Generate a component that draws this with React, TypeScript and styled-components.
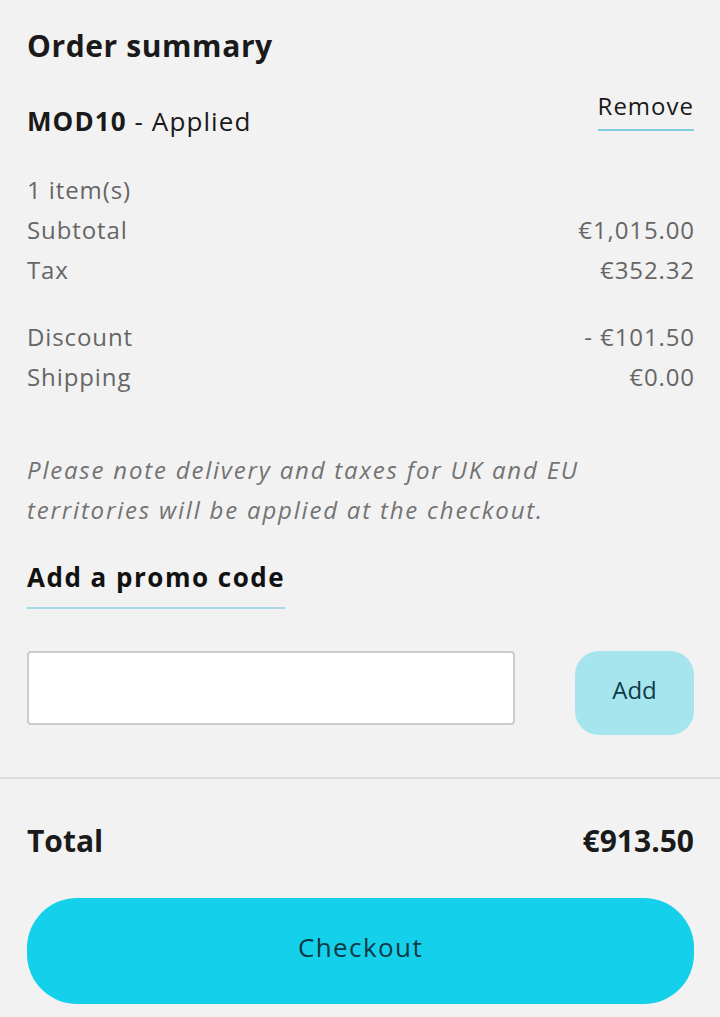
import React from 'react'
import styled, { createGlobalStyle } from 'styled-components'

const GlobalStyle = createGlobalStyle`
    * { box-sizing: border-box; }
    html, body {
        margin: 0;
        padding: 0;
        background: #f2f2f2;
    }
    body {
        font-family: 'Open Sans', 'Lato', sans-serif;
        color: #1a1a1a;
    }
`

interface Line {
    label: string;
    value: string;
}

const firstGroup: Line[] = [
    { label: 'Subtotal', value: '€1,015.00' },
    { label: 'Tax', value: '€352.32' },
]

const secondGroup: Line[] = [
    { label: 'Discount', value: '- €101.50' },
    { label: 'Shipping', value: '€0.00' },
]

function App() {
    return (
        <>
            <GlobalStyle />
            <Page>
                <Section>
                    <Title>Order summary</Title>

                    <CouponRow>
                        <CouponText><b>MOD10</b> - Applied</CouponText>
                        <LinkButton>Remove</LinkButton>
                    </CouponRow>

                    <Lines>
                        <Muted>1 item(s)</Muted>
                        {firstGroup.map(l => (
                            <LineRow key={l.label}>
                                <span>{l.label}</span>
                                <span>{l.value}</span>
                            </LineRow>
                        ))}
                    </Lines>

                    <Lines $gap>
                        {secondGroup.map(l => (
                            <LineRow key={l.label}>
                                <span>{l.label}</span>
                                <span>{l.value}</span>
                            </LineRow>
                        ))}
                    </Lines>

                    <Note>
                        Please note delivery and taxes for UK and EU territories will be applied at the checkout.
                    </Note>

                    <PromoHeading>Add a promo code</PromoHeading>

                    <PromoForm>
                        <PromoInput type="text" />
                        <AddButton>Add</AddButton>
                    </PromoForm>
                </Section>

                <Footer>
                    <TotalRow>
                        <span>Total</span>
                        <span>€913.50</span>
                    </TotalRow>
                    <CheckoutButton>Checkout</CheckoutButton>
                </Footer>
            </Page>
        </>
    )
}

export default App

export const Page = styled.div`
    width: 720px;
    min-height: 1017px;
    background: #f2f2f2;
`

export const Section = styled.div`
    padding: 26px 26px 42px 27px;
    border-bottom: 2px solid #dddddd;
`

export const Title = styled.h2`
    margin: 0;
    font-size: 30px;
    line-height: 40px;
    font-weight: 700;
    letter-spacing: 0.6px;
    color: #1a1a1a;
`

export const CouponRow = styled.div`
    display: flex;
    justify-content: space-between;
    align-items: flex-start;
    margin-top: 30px;
`

export const CouponText = styled.div`
    font-size: 26px;
    line-height: 34px;
    margin-top: 8px;
    letter-spacing: 1.1px;
    b { font-weight: 700; }
`

export const LinkButton = styled.button`
    background: none;
    border: none;
    margin-top: -4px;
    padding: 0 0 9px;
    font-family: inherit;
    font-size: 24px;
    line-height: 28px;
    letter-spacing: 1px;
    color: #1a1a1a;
    border-bottom: 2px solid #7fcfdf;
    cursor: pointer;
`

export const Lines = styled.div<{ $gap?: boolean }>`
    margin-top: ${p => (p.$gap ? '27px' : '32px')};
    margin-right: -1px;
    display: flex;
    flex-direction: column;
    font-size: 24px;
    line-height: 40px;
    letter-spacing: 0.9px;
    color: #666666;
`

export const Muted = styled.div`
    color: #666666;
`

export const LineRow = styled.div`
    display: flex;
    justify-content: space-between;
`

export const Note = styled.p`
    margin: 53px 0 0;
    font-size: 24px;
    line-height: 40px;
    font-style: italic;
    color: #737373;
    letter-spacing: 1.8px;
    max-width: 600px;
`

export const PromoHeading = styled.h3`
    display: inline-block;
    margin: 30px 0 0;
    padding-bottom: 13px;
    font-size: 26px;
    line-height: 34px;
    font-weight: 700;
    letter-spacing: 1.5px;
    color: #111111;
    border-bottom: 2px solid #a6d8ea;
`

export const PromoForm = styled.div`
    display: flex;
    justify-content: space-between;
    align-items: flex-start;
    margin-top: 42px;
`

export const PromoInput = styled.input`
    width: 488px;
    height: 74px;
    background: #ffffff;
    border: 2px solid #cccccc;
    border-radius: 4px;
    font-size: 24px;
    padding: 0 16px;
    font-family: inherit;
`

export const AddButton = styled.button`
    width: 119px;
    height: 84px;
    padding: 0 0 8px;
    border: none;
    border-radius: 24px;
    background: #a6e4ee;
    color: #0d3c48;
    font-family: inherit;
    font-size: 24px;
    cursor: pointer;
`

export const Footer = styled.div`
    padding: 42px 26px 14px 27px;
`

export const TotalRow = styled.div`
    display: flex;
    justify-content: space-between;
    font-size: 30px;
    line-height: 40px;
    font-weight: 700;
    color: #1a1a1a;
`

export const CheckoutButton = styled.button`
    width: 100%;
    height: 106px;
    padding: 0 0 8px;
    margin-top: 37px;
    border: none;
    border-radius: 50px;
    background: #15d0ea;
    color: #0b3a46;
    font-family: inherit;
    font-size: 26px;
    letter-spacing: 1.4px;
    cursor: pointer;
`
